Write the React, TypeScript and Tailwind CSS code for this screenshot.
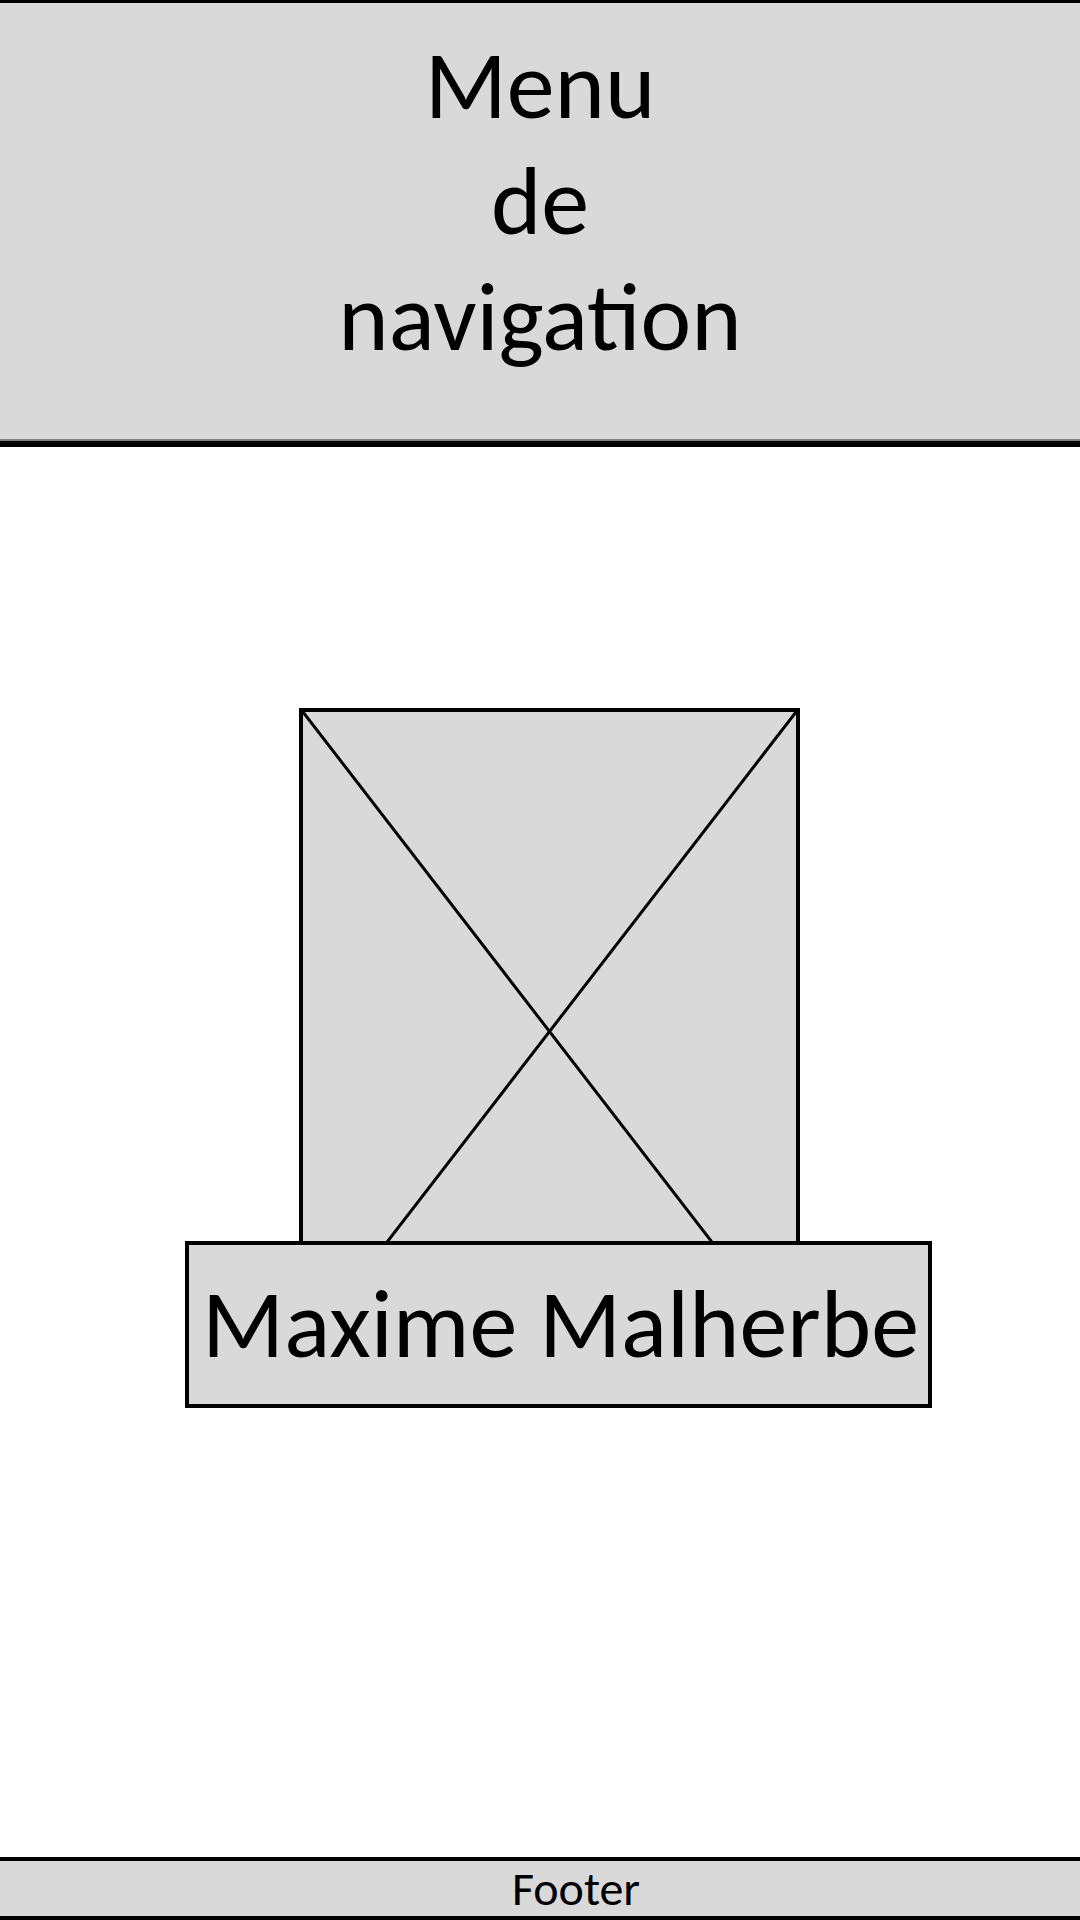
import React from "react";

export default function App() {
  const font = { fontFamily: "Carlito, Calibri, Lato, sans-serif" };
  return (
    <div className="flex min-h-[1920px] w-[1080px] flex-col bg-white text-black" style={font}>
      <header className="flex h-[447px] flex-col items-center justify-center border-t-[3px] border-b-[6px] border-black bg-[#d9d9d9] pb-[40px] shadow-[inset_0_-2px_0_#7f7f7f]">
        <div className="text-center text-[96px] leading-[116px]">
          <div>Menu</div>
          <div>de</div>
          <div>navigation</div>
        </div>
      </header>
      <main className="flex flex-1 flex-col items-start pt-[261px]">
        <div className="ml-[299px] h-[647px] w-[501px] border-[4px] border-black bg-[#d9d9d9]">
          <svg className="block h-full w-full" viewBox="0 0 493 639" preserveAspectRatio="none">
            <line x1="0" y1="0" x2="493" y2="639" stroke="black" strokeWidth="3" />
            <line x1="493" y1="0" x2="0" y2="639" stroke="black" strokeWidth="3" />
          </svg>
        </div>
        <div className="relative ml-[185px] mt-[-114px] flex h-[167px] w-[747px] items-center justify-center border-[4px] border-black bg-[#d9d9d9] pl-[4px] text-[96px] leading-none">
          Maxime Malherbe
        </div>
      </main>
      <footer className="flex h-[63px] items-center justify-center border-t-[4px] border-b-[4px] border-black bg-[#d9d9d9] pl-[72px] text-[48px] leading-none">
        Footer
      </footer>
    </div>
  );
}
